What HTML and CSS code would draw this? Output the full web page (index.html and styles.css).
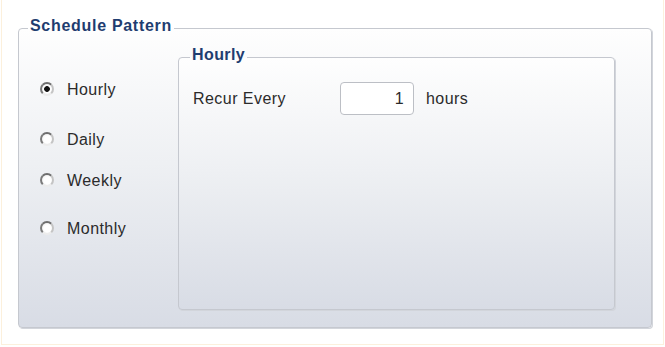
FILE: index.html
```html
<!DOCTYPE html>
<html lang="en">
<head>
    <meta charset="UTF-8">
    <meta name="viewport" content="width=device-width, initial-scale=1.0">
    <title>Schedule Pattern</title>
    <link rel="stylesheet" href="styles.css">
</head>
<body>
    <div class="page">
        <fieldset class="group schedule">
            <legend>Schedule Pattern</legend>
            <div class="schedule-body">
                <div class="options">
                    <label class="option opt-hourly"><span class="radio checked"></span>Hourly</label>
                    <label class="option opt-daily"><span class="radio"></span>Daily</label>
                    <label class="option opt-weekly"><span class="radio"></span>Weekly</label>
                    <label class="option opt-monthly"><span class="radio"></span>Monthly</label>
                </div>

                <fieldset class="group detail">
                    <legend>Hourly</legend>
                    <div class="row">
                        <span class="row-label">Recur Every</span>
                        <span class="number">1</span>
                        <span class="unit">hours</span>
                    </div>
                </fieldset>
            </div>
        </fieldset>
    </div>
</body>
</html>
```

FILE: styles.css
```css
* {
    margin: 0;
    padding: 0;
    box-sizing: border-box;
}

body {
    font-family: "Liberation Sans", Arial, sans-serif;
    font-size: 16px;
    letter-spacing: 0.45px;
    color: #2b2b2b;
    background: #fff;
}

.page {
    margin: 0 1px;
    height: 345px;
    border: 1px solid #fcf0dc;
    border-top: none;
    padding: 17px 0 0 16px;
}

.group {
    border: 1px solid #c5c8cf;
    border-radius: 4px;
    background: linear-gradient(to bottom, #fefefe 0%, #eef0f3 45%, #d8dce5 100%);
    box-shadow: 1px 1px 0 #d2d5db;
}

.group legend {
    font-weight: bold;
    color: #1f3d70;
    line-height: 18px;
    padding: 0 2px 4px;
    letter-spacing: 0.7px;
}

.schedule {
    width: 634px;
    padding: 0 36px 17px 0;
}

.schedule legend {
    margin-left: 9px;
}

.schedule-body {
    display: flex;
    height: 271px;
}

/* radio column */
.options {
    width: 159px;
    display: flex;
    flex-direction: column;
    padding-left: 21px;
}

.option {
    display: flex;
    align-items: center;
    gap: 13px;
    height: 21px;
    line-height: 21px;
}

.opt-hourly { margin-top: 40px; }
.opt-daily { margin-top: 29px; }
.opt-weekly { margin-top: 20px; }
.opt-monthly { margin-top: 27px; }

.radio {
    width: 14px;
    height: 14px;
    margin-top: -2px;
    border-radius: 50%;
    border: 2px solid;
    border-color: #6e6e6e #c4c4c4 #ececec #7a7a7a;
    background: radial-gradient(circle at 55% 55%, #ffffff 45%, #e4e4e4 100%);
}

.radio.checked {
    background:
        radial-gradient(circle, #111 0 2.5px, transparent 3.2px),
        radial-gradient(circle at 55% 55%, #ffffff 45%, #e4e4e4 100%);
}

/* detail panel */
.detail {
    flex: 1;
    margin-top: 7px;
    padding: 0;
}

.detail legend {
    margin-left: 11px;
    letter-spacing: 0.4px;
}

.row {
    display: flex;
    align-items: center;
    margin-top: 14px;
    padding-left: 14px;
}

.row-label {
    width: 147px;
}

.number {
    width: 74px;
    height: 33px;
    line-height: 31px;
    text-align: right;
    padding-right: 9px;
    background: #fff;
    border: 1px solid #bcbfc5;
    border-radius: 4px;
}

.unit {
    margin-left: 12px;
}
```
